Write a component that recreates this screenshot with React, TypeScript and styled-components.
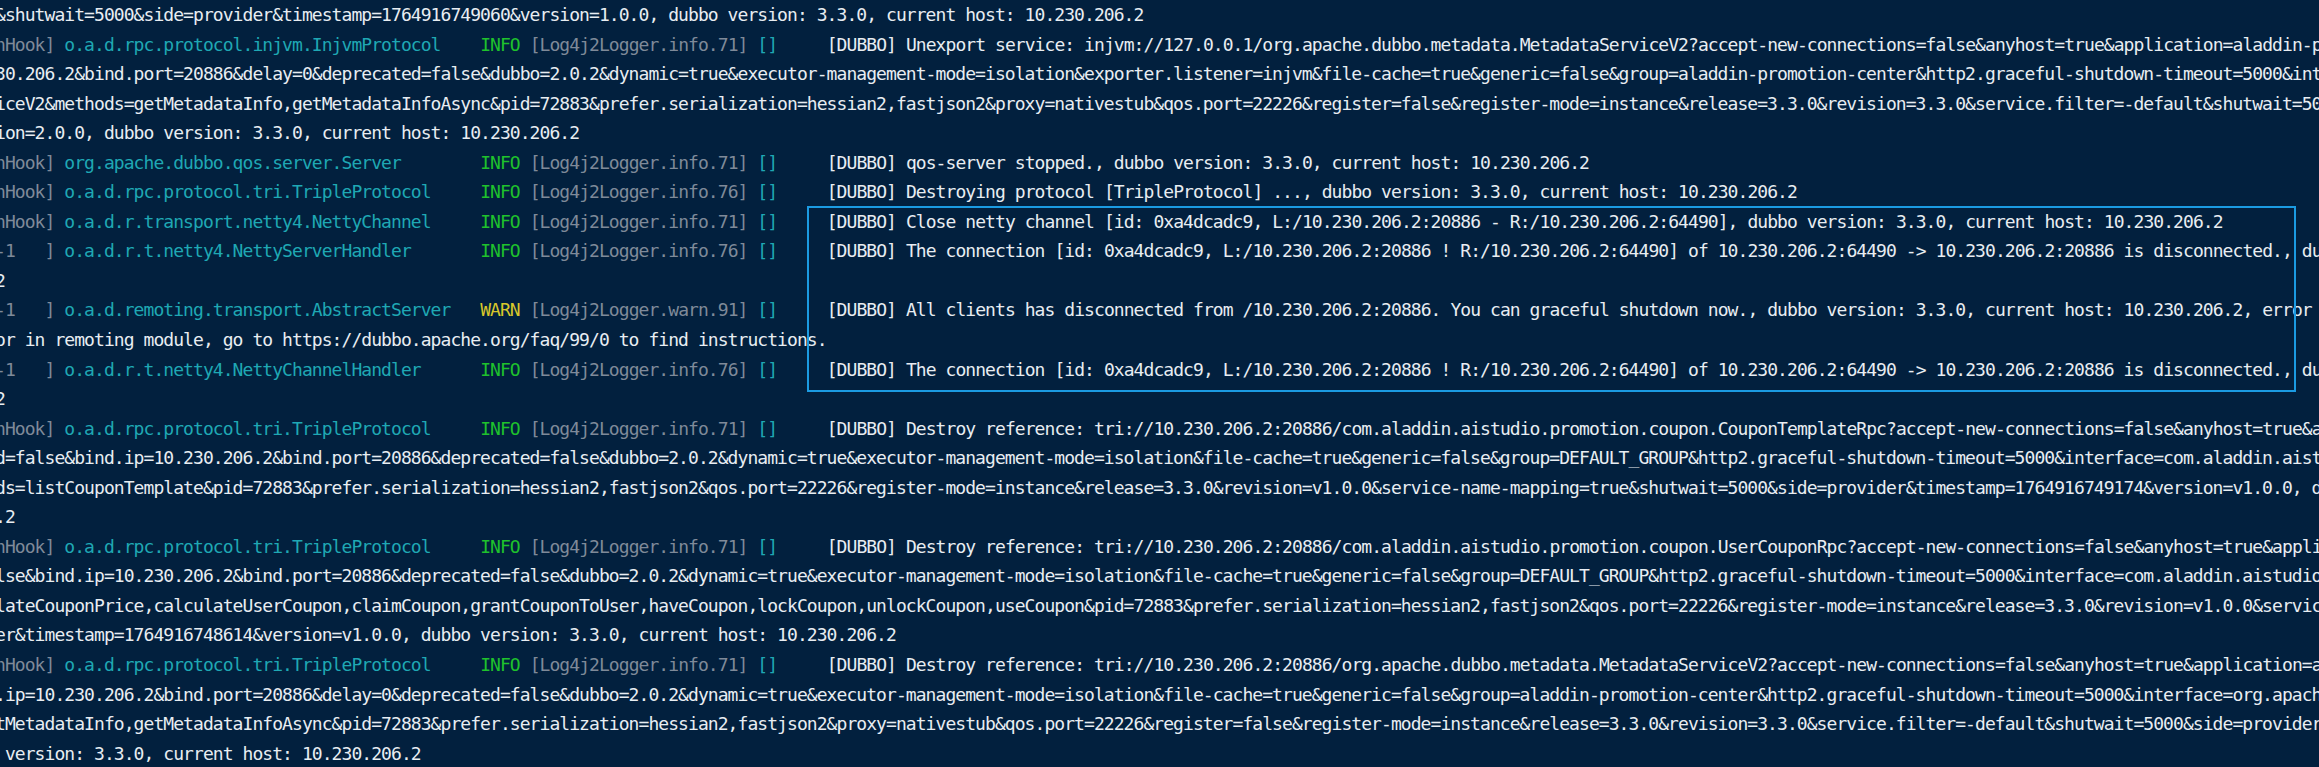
import React from "react";
import styled, { createGlobalStyle } from "styled-components";

const CHAR_W = 9.9;
const LINE_H = 29.56;
const OFFSET_X = -5;
const FONT_SIZE = 18;
const ADVANCE = 0.60205;

const GlobalStyle = createGlobalStyle`
  html, body {
    margin: 0;
    padding: 0;
    background: #02203e;
    overflow: hidden;
  }
  #root {
    width: 2319px;
    height: 767px;
  }
`;

const Console = styled.div`
  position: relative;
  width: 2319px;
  height: 767px;
  overflow: hidden;
  background: #02203e;
  font-family: "DejaVu Sans Mono", "Liberation Mono", monospace;
  font-size: ${FONT_SIZE}px;
  letter-spacing: ${CHAR_W - FONT_SIZE * ADVANCE}px;
  color: #e8edf2;
`;

const Lines = styled.div`
  display: flex;
  flex-direction: column;
  margin-left: ${OFFSET_X}px;
`;

const Line = styled.div`
  height: ${LINE_H}px;
  line-height: ${LINE_H}px;
  white-space: pre;
`;

const Thread = styled.span`
  color: #7f8a99;
`;

const Logger = styled.span`
  color: #1fa8b4;
`;

const Level = styled.span<{ $warn?: boolean }>`
  color: ${(p) => (p.$warn ? "#d8c72b" : "#1fc22c")};
`;

const Source = styled.span`
  color: #7f8a99;
`;

const Ctx = styled.span`
  color: #1fa8b4;
`;

const Msg = styled.span`
  color: #e8edf2;
`;

const Highlight = styled.div`
  position: absolute;
  left: ${OFFSET_X + 84 * CHAR_W - 20}px;
  top: 206px;
  width: 1489px;
  height: 186px;
  border: 2px solid #1b9be2;
  box-sizing: border-box;
  pointer-events: none;
`;

type Head = {
  kind: "head";
  thread: string;
  logger: string;
  level: "INFO" | "WARN";
  source: string;
  msg: string;
};
type Wrap = { kind: "wrap"; text: string };
type Row = Head | Wrap;

const HOOK = "nHook]";
const WORKER = "-1   ]";

const rows: Row[] = [
  {
    kind: "wrap",
    text: "&shutwait=5000&side=provider&timestamp=1764916749060&version=1.0.0, dubbo version: 3.3.0, current host: 10.230.206.2",
  },
  {
    kind: "head",
    thread: HOOK,
    logger: "o.a.d.rpc.protocol.injvm.InjvmProtocol",
    level: "INFO",
    source: "[Log4j2Logger.info.71]",
    msg: "[DUBBO] Unexport service: injvm://127.0.0.1/org.apache.dubbo.metadata.MetadataServiceV2?accept-new-connections=false&anyhost=true&application=aladdin-promotion-center&bind.ip=10.2",
  },
  {
    kind: "wrap",
    text: "30.206.2&bind.port=20886&delay=0&deprecated=false&dubbo=2.0.2&dynamic=true&executor-management-mode=isolation&exporter.listener=injvm&file-cache=true&generic=false&group=aladdin-promotion-center&http2.graceful-shutdown-timeout=5000&interface=org.apache.dubbo.metadata.MetadataServiceV2",
  },
  {
    kind: "wrap",
    text: "iceV2&methods=getMetadataInfo,getMetadataInfoAsync&pid=72883&prefer.serialization=hessian2,fastjson2&proxy=nativestub&qos.port=22226&register=false&register-mode=instance&release=3.3.0&revision=3.3.0&service.filter=-default&shutwait=5000&side=provider&timestamp=1764916749060",
  },
  {
    kind: "wrap",
    text: "ion=2.0.0, dubbo version: 3.3.0, current host: 10.230.206.2",
  },
  {
    kind: "head",
    thread: HOOK,
    logger: "org.apache.dubbo.qos.server.Server",
    level: "INFO",
    source: "[Log4j2Logger.info.71]",
    msg: "[DUBBO] qos-server stopped., dubbo version: 3.3.0, current host: 10.230.206.2",
  },
  {
    kind: "head",
    thread: HOOK,
    logger: "o.a.d.rpc.protocol.tri.TripleProtocol",
    level: "INFO",
    source: "[Log4j2Logger.info.76]",
    msg: "[DUBBO] Destroying protocol [TripleProtocol] ..., dubbo version: 3.3.0, current host: 10.230.206.2",
  },
  {
    kind: "head",
    thread: HOOK,
    logger: "o.a.d.r.transport.netty4.NettyChannel",
    level: "INFO",
    source: "[Log4j2Logger.info.71]",
    msg: "[DUBBO] Close netty channel [id: 0xa4dcadc9, L:/10.230.206.2:20886 - R:/10.230.206.2:64490], dubbo version: 3.3.0, current host: 10.230.206.2",
  },
  {
    kind: "head",
    thread: WORKER,
    logger: "o.a.d.r.t.netty4.NettyServerHandler",
    level: "INFO",
    source: "[Log4j2Logger.info.76]",
    msg: "[DUBBO] The connection [id: 0xa4dcadc9, L:/10.230.206.2:20886 ! R:/10.230.206.2:64490] of 10.230.206.2:64490 -> 10.230.206.2:20886 is disconnected., dubbo version: 3.3.0",
  },
  { kind: "wrap", text: "2" },
  {
    kind: "head",
    thread: WORKER,
    logger: "o.a.d.remoting.transport.AbstractServer",
    level: "WARN",
    source: "[Log4j2Logger.warn.91]",
    msg: "[DUBBO] All clients has disconnected from /10.230.206.2:20886. You can graceful shutdown now., dubbo version: 3.3.0, current host: 10.230.206.2, error code: 99-0",
  },
  {
    kind: "wrap",
    text: "or in remoting module, go to https://dubbo.apache.org/faq/99/0 to find instructions.",
  },
  {
    kind: "head",
    thread: WORKER,
    logger: "o.a.d.r.t.netty4.NettyChannelHandler",
    level: "INFO",
    source: "[Log4j2Logger.info.76]",
    msg: "[DUBBO] The connection [id: 0xa4dcadc9, L:/10.230.206.2:20886 ! R:/10.230.206.2:64490] of 10.230.206.2:64490 -> 10.230.206.2:20886 is disconnected., dubbo version: 3.3.0",
  },
  { kind: "wrap", text: "2" },
  {
    kind: "head",
    thread: HOOK,
    logger: "o.a.d.rpc.protocol.tri.TripleProtocol",
    level: "INFO",
    source: "[Log4j2Logger.info.71]",
    msg: "[DUBBO] Destroy reference: tri://10.230.206.2:20886/com.aladdin.aistudio.promotion.coupon.CouponTemplateRpc?accept-new-connections=false&anyhost=true&application=aladdin-promotion",
  },
  {
    kind: "wrap",
    text: "d=false&bind.ip=10.230.206.2&bind.port=20886&deprecated=false&dubbo=2.0.2&dynamic=true&executor-management-mode=isolation&file-cache=true&generic=false&group=DEFAULT_GROUP&http2.graceful-shutdown-timeout=5000&interface=com.aladdin.aistudio.promotion.coupon.CouponTemplateRpc",
  },
  {
    kind: "wrap",
    text: "ds=listCouponTemplate&pid=72883&prefer.serialization=hessian2,fastjson2&qos.port=22226&register-mode=instance&release=3.3.0&revision=v1.0.0&service-name-mapping=true&shutwait=5000&side=provider&timestamp=1764916749174&version=v1.0.0, dubbo version: 3.3.0, current host: 10.230.206",
  },
  { kind: "wrap", text: ".2" },
  {
    kind: "head",
    thread: HOOK,
    logger: "o.a.d.rpc.protocol.tri.TripleProtocol",
    level: "INFO",
    source: "[Log4j2Logger.info.71]",
    msg: "[DUBBO] Destroy reference: tri://10.230.206.2:20886/com.aladdin.aistudio.promotion.coupon.UserCouponRpc?accept-new-connections=false&anyhost=true&application=aladdin-promotion",
  },
  {
    kind: "wrap",
    text: "lse&bind.ip=10.230.206.2&bind.port=20886&deprecated=false&dubbo=2.0.2&dynamic=true&executor-management-mode=isolation&file-cache=true&generic=false&group=DEFAULT_GROUP&http2.graceful-shutdown-timeout=5000&interface=com.aladdin.aistudio.promotion.coupon.UserCouponRpc",
  },
  {
    kind: "wrap",
    text: "lateCouponPrice,calculateUserCoupon,claimCoupon,grantCouponToUser,haveCoupon,lockCoupon,unlockCoupon,useCoupon&pid=72883&prefer.serialization=hessian2,fastjson2&qos.port=22226&register-mode=instance&release=3.3.0&revision=v1.0.0&service-name-mapping=true&shutwait=5000&side=provid",
  },
  {
    kind: "wrap",
    text: "er&timestamp=1764916748614&version=v1.0.0, dubbo version: 3.3.0, current host: 10.230.206.2",
  },
  {
    kind: "head",
    thread: HOOK,
    logger: "o.a.d.rpc.protocol.tri.TripleProtocol",
    level: "INFO",
    source: "[Log4j2Logger.info.71]",
    msg: "[DUBBO] Destroy reference: tri://10.230.206.2:20886/org.apache.dubbo.metadata.MetadataServiceV2?accept-new-connections=false&anyhost=true&application=aladdin-promotion-center",
  },
  {
    kind: "wrap",
    text: ".ip=10.230.206.2&bind.port=20886&delay=0&deprecated=false&dubbo=2.0.2&dynamic=true&executor-management-mode=isolation&file-cache=true&generic=false&group=aladdin-promotion-center&http2.graceful-shutdown-timeout=5000&interface=org.apache.dubbo.metadata.MetadataServiceV2",
  },
  {
    kind: "wrap",
    text: "tMetadataInfo,getMetadataInfoAsync&pid=72883&prefer.serialization=hessian2,fastjson2&proxy=nativestub&qos.port=22226&register=false&register-mode=instance&release=3.3.0&revision=3.3.0&service.filter=-default&shutwait=5000&side=provider&timestamp=1764916748600",
  },
  {
    kind: "wrap",
    text: " version: 3.3.0, current host: 10.230.206.2",
  },
];

function renderRow(row: Row, i: number) {
  if (row.kind === "wrap") {
    return (
      <Line key={i}>
        <Msg>{row.text}</Msg>
      </Line>
    );
  }
  return (
    <Line key={i}>
      <Thread>{row.thread}</Thread>
      {" "}
      <Logger>{row.logger.padEnd(42, " ")}</Logger>
      <Level $warn={row.level === "WARN"}>{row.level}</Level>
      {" "}
      <Source>{row.source}</Source>
      {" "}
      <Ctx>[]</Ctx>
      {"     "}
      <Msg>{row.msg}</Msg>
    </Line>
  );
}

export default function App() {
  return (
    <>
      <GlobalStyle />
      <Console>
        <Lines>{rows.map(renderRow)}</Lines>
        <Highlight />
      </Console>
    </>
  );
}
